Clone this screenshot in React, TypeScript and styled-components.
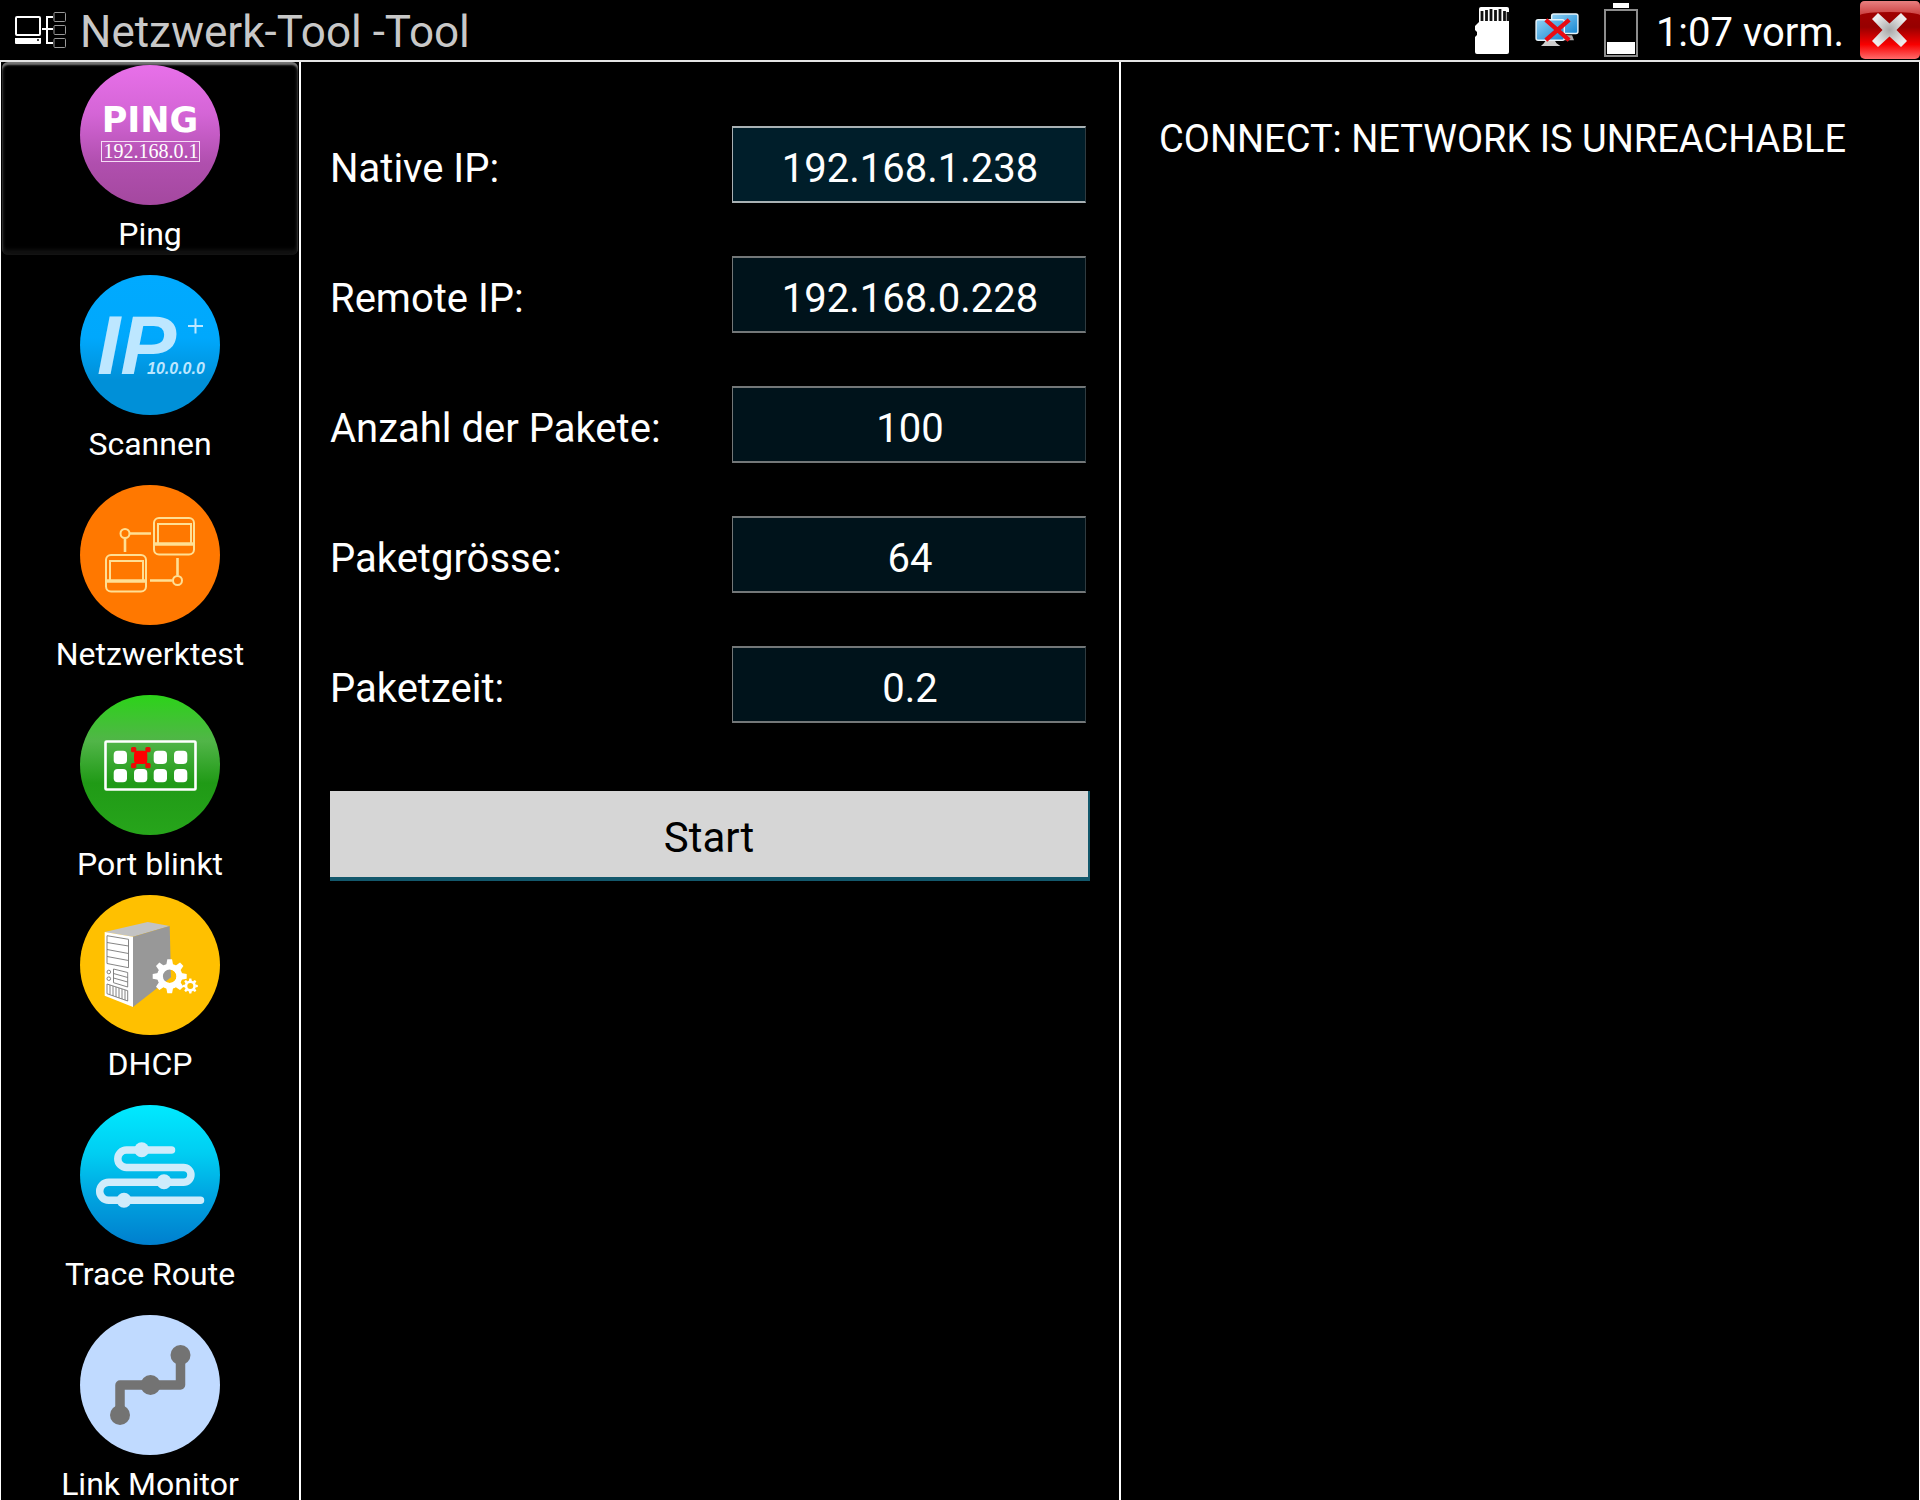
import React, { useState } from "react";
import styled, { createGlobalStyle } from "styled-components";

const GlobalStyle = createGlobalStyle`
  *, *::before, *::after { box-sizing: border-box; }
  body {
    margin: 0;
    background: #000;
    color: #fff;
    font-family: Roboto, "Liberation Sans", sans-serif;
  }
  button, input { font: inherit; color: inherit; }
`;

const Screen = styled.div`
  display: flex;
  flex-direction: column;
  height: 100vh;
  overflow: hidden;
`;

const TopBar = styled.header`
  flex: none;
  display: flex;
  align-items: center;
  height: 62px;
  padding-left: 14px;
  border-bottom: 2px solid #e4e4e4;
`;

const Title = styled.h1`
  flex: 1;
  margin: 0;
  padding: 4px 0 0 13px;
  font-size: 44px;
  font-weight: 400;
  line-height: 52px;
  color: #c8c8c8;
`;

const StatusArea = styled.div`
  display: flex;
  align-items: center;
  height: 60px;
`;

const StatusIcons = styled.div`
  display: flex;
  align-items: center;
  gap: 25px;
`;

const Clock = styled.time`
  padding: 6px 16px 0 18px;
  font-size: 40px;
  line-height: 48px;
`;

const CloseButton = styled.button`
  display: block;
  width: 60px;
  height: 60px;
  padding: 0;
  border: 0;
  background: none;
  cursor: pointer;
`;

const Columns = styled.div`
  flex: 1;
  min-height: 0;
  display: grid;
  grid-template-columns: 301px 820fr 799fr;
`;

const Sidebar = styled.nav`
  display: flex;
  flex-direction: column;
  gap: 7px;
  min-height: 0;
  overflow-y: auto;
  scrollbar-width: none;
  border-left: 1px solid #fff;
  border-right: 2px solid #fff;
`;

const ToolGroup = styled.div`
  flex: none;
  display: flex;
  flex-direction: column;
  gap: 17px;
`;

const ToolButton = styled.button<{ $active: boolean }>`
  display: flex;
  flex-direction: column;
  align-items: center;
  gap: 13px;
  margin: 0 1px;
  padding: 3px 0 5px;
  border: 0;
  border-radius: 6px;
  background: none;
  box-shadow: ${(p) =>
    p.$active
      ? "inset 0 3px 2px #777, inset 2px 0 3px #141414, inset -2px 0 3px #141414, inset 0 -5px 4px #141414"
      : "none"};
  cursor: pointer;

  svg { display: block; }
`;

const ToolLabel = styled.span`
  font-size: 32px;
  line-height: 32px;
`;

const SettingsPanel = styled.form`
  padding: 64px 29px;
  border-right: 2px solid #fff;
`;

const Fields = styled.div`
  display: grid;
  gap: 53px;
  padding-right: 4px;
`;

const Field = styled.div`
  display: grid;
  grid-template-columns: 402fr 354fr;
  align-items: center;
`;

const FieldLabel = styled.label`
  padding-top: 9px;
  font-size: 40px;
  line-height: 48px;
`;

const FieldInput = styled.input<{ $bright: boolean }>`
  width: 100%;
  height: 77px;
  padding: 7px 8px 0 10px;
  border: solid ${(p) => (p.$bright ? "#a9b1b4" : "#737778")};
  border-width: 2px 1px;
  border-right-color: #2f3b40;
  border-radius: 0;
  outline: 0;
  background: ${(p) => (p.$bright ? "#001e2a" : "#00131b")};
  font-size: 40px;
  text-align: center;
`;

const StartButton = styled.button`
  display: block;
  width: 100%;
  height: 90px;
  margin-top: 68px;
  padding: 7px 0 0;
  border: solid #13586c;
  border-width: 0 2px 4px 0;
  background: #d6d6d6;
  color: #000;
  font-size: 42px;
  cursor: pointer;
`;

const OutputPanel = styled.section`
  padding: 54px 38px;
  border-right: 1px solid #fff;
`;

const OutputText = styled.output`
  display: block;
  font-size: 38px;
  line-height: 46px;
`;

function AppIcon() {
  return (
    <svg width="53" height="37" viewBox="14 12 53 37" fill="none" aria-hidden="true">
      <rect x="16" y="17" width="24" height="18" rx="1" stroke="#fff" strokeWidth="2" />
      <path d="M15 38h26v5q0 1-1 1H16q-1 0-1-1z" fill="#fff" />
      <path d="M37 40h2" stroke="#000" strokeWidth="1.5" />
      <path d="M53 17H47V43H53M42 29H53" stroke="#fff" strokeWidth="2" />
      <g stroke="#999">
        <rect x="54" y="12.5" width="11.5" height="9" rx="1" />
        <rect x="54" y="25.5" width="11.5" height="9" rx="1" />
        <rect x="54" y="38.5" width="11.5" height="9" rx="1" />
      </g>
    </svg>
  );
}

function SdCardIcon() {
  return (
    <svg width="36" height="47" viewBox="0 0 36 47" role="img" aria-label="SD-Karte">
      <path d="M7 0H33q2 0 2 2V45q0 2-2 2H3q-2 0-2-2V30l2-2V25L1 23V19L5 15V2q0-2 2-2z" fill="#fff" />
      <path d="M8 4v10M12.5 3v11M17 2v12M21.500 3v11M26 2v12M30.500 4v10M34 5v9" stroke="#111" strokeWidth="2.800" />
    </svg>
  );
}

function NetworkOffIcon() {
  return (
    <svg width="44" height="35" viewBox="0 0 45 36" role="img" aria-label="Netzwerk getrennt">
      <defs>
        <linearGradient id="monitor" x1="0" y1="0" x2="1" y2="1">
          <stop offset="0" stopColor="#8fd0f4" />
          <stop offset="1" stopColor="#1687d2" />
        </linearGradient>
      </defs>
      <path d="M26 28l4-5h8l2 5z" fill="#aaa" />
      <rect x="17" y="1" width="27" height="20" rx="2" fill="url(#monitor)" stroke="#e6f3fa" strokeWidth="1.5" />
      <path d="M6 34l3-3 2-3h9l2 3 4 3z" fill="#ccc" />
      <rect x="1" y="7" width="29" height="21" rx="2" fill="url(#monitor)" stroke="#e6f3fa" strokeWidth="1.5" />
      <path d="M11 7L35 28M35 7L11 28" stroke="#e80c14" strokeWidth="4.500" />
    </svg>
  );
}

function BatteryIcon() {
  return (
    <svg width="34" height="54" viewBox="0 0 34 54" role="img" aria-label="Akku schwach">
      <rect x="9" y="0" width="16" height="5" fill="#fff" />
      <rect x="1" y="7" width="32" height="46" fill="none" stroke="#8d8d8d" strokeWidth="2" />
      <rect x="3" y="39" width="28" height="12" fill="#fff" />
    </svg>
  );
}

function CloseIcon() {
  return (
    <svg width="60" height="60" viewBox="0 0 60 60" aria-hidden="true">
      <defs>
        <linearGradient id="closeBody" x1="0" y1="0" x2="0" y2="1">
          <stop offset="0.200" stopColor="#a00000" />
          <stop offset="0.450" stopColor="#970000" />
          <stop offset="0.750" stopColor="#f80000" />
          <stop offset="1" stopColor="#ff6a6a" />
        </linearGradient>
        <linearGradient id="closeGloss" x1="0" y1="0" x2="0" y2="1">
          <stop offset="0" stopColor="#e98080" />
          <stop offset="1" stopColor="#cb3f3f" />
        </linearGradient>
        <radialGradient id="closeCross">
          <stop offset="0" stopColor="#a8a8a8" />
          <stop offset="1" stopColor="#ececec" />
        </radialGradient>
      </defs>
      <rect x="0" y="1" width="60" height="58" rx="5" fill="url(#closeBody)" />
      <path d="M0 15V6q0-5 5-5H55q5 0 5 5V15Q55 12 30 12T0 15z" fill="url(#closeGloss)" />
      <path
        d="M18 13L29.500 23.500 41 13 47 19 36.500 30 47 41 41 47 29.500 36.500 18 47 12 41 22.500 30 12 19z"
        fill="url(#closeCross)"
      />
    </svg>
  );
}

const Disc = ({ id, stops, children }: { id: string; stops: [number, string][]; children: React.ReactNode }) => (
  <svg width="140" height="140" viewBox="0 0 140 140" aria-hidden="true">
    <defs>
      <linearGradient id={id} x1="0" y1="0" x2="0" y2="1">
        {stops.map(([offset, color]) => (
          <stop key={offset} offset={offset} stopColor={color} />
        ))}
      </linearGradient>
    </defs>
    <circle cx="70" cy="70" r="70" fill={`url(#${id})`} />
    {children}
  </svg>
);

const PingIcon = () => (
  <Disc id="ping" stops={[[0, "#e870e9"], [0.35, "#d465d6"], [0.7, "#b04fae"], [1, "#a4489f"]]}>
    <text x="70" y="67" textAnchor="middle" fill="#fff" fontFamily="DejaVu Sans, sans-serif" fontWeight="700" fontSize="35">PING</text>
    <rect x="21.500" y="76.500" width="98" height="20" fill="none" stroke="#f6dcf6" />
    <text x="71" y="93" textAnchor="middle" fill="#fff" fontFamily="Liberation Serif, serif" fontSize="20">192.168.0.1</text>
  </Disc>
);

const ScanIcon = () => (
  <Disc id="scan" stops={[[0, "#00aaff"], [0.45, "#00a8fc"], [0.75, "#0090d8"], [1, "#0090d8"]]}>
    <g fill="#bde7ff" fontFamily="Liberation Sans, sans-serif" fontWeight="700" fontStyle="italic">
      <text x="17" y="99" fontSize="84">IP</text>
      <text x="67" y="99" fontSize="16" fontFamily="Liberation Sans Narrow, Liberation Sans, sans-serif">10.0.0.0</text>
    </g>
    <path d="M108 51h15M115.500 43.500v15" stroke="#bde7ff" strokeWidth="2" />
  </Disc>
);

const Computer = ({ x, y }: { x: number; y: number }) => (
  <g transform={`translate(${x} ${y})`}>
    <rect x="1" y="1" width="40" height="36.500" rx="5" strokeWidth="2" />
    <path d="M5 27V7H38V27" strokeWidth="2" />
    <path d="M2 27H40" strokeWidth="3.500" />
  </g>
);

const NetTestIcon = () => (
  <Disc id="nettest" stops={[[0, "#ff7800"], [1, "#ff7800"]]}>
    <g fill="none" stroke="#ffdf94">
      <Computer x={73} y={32} />
      <Computer x={25} y={69} />
      <g strokeWidth="2.600">
        <path d="M50 48.500H71M45 53.500V67M97.500 73V90.500M92.500 95.500H70" />
        <circle cx="45" cy="48.500" r="4.500" strokeWidth="2" />
        <circle cx="97.500" cy="95.500" r="4.500" strokeWidth="2" />
      </g>
    </g>
  </Disc>
);

const PortIcon = () => (
  <Disc id="port" stops={[[0, "#2cd319"], [0.33, "#51b548"], [0.63, "#209a16"], [1, "#27a51b"]]}>
    <rect x="25.500" y="46.500" width="90" height="48" rx="1" fill="none" stroke="#fff" strokeWidth="2.600" />
    {[55.700, 74].map((y) =>
      [33.700, 54, 73.700, 94].map((x) => (
        <rect key={`${x}-${y}`} x={x} y={y} width="13.300" height="13.300" rx="4" fill={x === 54 && y < 60 ? "#f00" : "#fff"} />
      ))
    )}
    {[51, 65.300].map((x) =>
      [52, 68].map((y) => <rect key={`${x}-${y}`} x={x} y={y} width="5.300" height="5.300" rx="1.500" fill="#e80f08" />)
    )}
    <path d="M54 55l3 3M68 55l-3 3M54 70l3-3M68 70l-3-3" stroke="#f00" strokeWidth="2" />
  </Disc>
);

const Gear = ({ cx, cy, r }: { cx: number; cy: number; r: number }) => (
  <g transform={`translate(${cx} ${cy})`}>
    <circle r={r * 0.57} fill="none" stroke="#fff" strokeWidth={r * 0.34} />
    {[0, 45, 90, 135, 180, 225, 270, 315].map((a) => (
      <path
        key={a}
        transform={`rotate(${a})`}
        d={`M${-r * 0.2} ${-r * 0.68}L${-r * 0.14} ${-r}H${r * 0.14}L${r * 0.2} ${-r * 0.68}z`}
        fill="#fff"
      />
    ))}
  </g>
);

const DhcpIcon = () => (
  <Disc id="dhcp" stops={[[0, "#ffc000"], [1, "#ffc000"]]}>
    <path d="M24.700 37L67.700 27 89.700 31 53 41.700z" fill="#c3c3c3" />
    <path d="M53 41.700L89.700 31 91 82.300 53 112z" fill="#989898" />
    <path d="M24.700 37L53 41.700V112L24.700 100.700z" fill="#fff" />
    <g fill="none" stroke="#777" strokeWidth="0.900">
      <path d="M27 40.700L48.500 44.300V72.700L27 68.500zM27 47.500L48.500 51M27 54.500L48.500 58.500M27 61.500L48.500 65.500" />
      <circle cx="28.800" cy="77" r="1.800" />
      <circle cx="28.800" cy="83.700" r="1.800" />
      <path d="M33.500 74L47.700 77.500V92L33.500 87.700zM33.500 78.500L47.700 82.500M33.500 83L47.700 87" />
      <path d="M27 89L47.700 95.700V106L27 98.700zM30 90v9.500M33 91v10M36 92v10M39 93v10M42 94v10M45 95v10" />
    </g>
    <circle cx="89.700" cy="81.300" r="12" fill="#fff" />
    <circle cx="89.700" cy="81.300" r="6.800" fill="#ffc000" />
    <path d="M90.700 74.500A6.800 6.800 0 1 0 85.700 86.500L91 82.300z" fill="#989898" />
    <Gear cx={89.700} cy={81.300} r={17} />
    <Gear cx={110.300} cy={91} r={7.500} />
  </Disc>
);

const TraceIcon = () => (
  <Disc id="trace" stops={[[0, "#00eaff"], [0.35, "#00cdf2"], [0.65, "#00a4e0"], [1, "#007fce"]]}>
    <path
      d="M91.500 45H46.500A8.700 8.700 0 0 0 46.500 62.400H103.500A7.400 7.400 0 0 1 103.500 77.300H28.700A9 9 0 0 0 28.700 95.300H120.500"
      fill="none"
      stroke="#cfecfb"
      strokeWidth="7.500"
      strokeLinecap="round"
    />
    <g fill="#cfecfb">
      <circle cx="61.700" cy="44.700" r="7.500" />
      <circle cx="84" cy="76.700" r="7.500" />
      <circle cx="44" cy="95.300" r="7.500" />
    </g>
  </Disc>
);

const LinkIcon = () => (
  <Disc id="link" stops={[[0, "#c0daff"], [1, "#c0daff"]]}>
    <path d="M40 100V70H100.500V40" fill="none" stroke="#737373" strokeWidth="9.500" strokeLinejoin="round" />
    <g fill="#737373">
      <circle cx="40" cy="100" r="10" />
      <circle cx="70.500" cy="70" r="10" />
      <circle cx="100.500" cy="40" r="10" />
    </g>
  </Disc>
);

const toolGroups = [
  [
    { name: "Ping", Icon: PingIcon },
    { name: "Scannen", Icon: ScanIcon },
    { name: "Netzwerktest", Icon: NetTestIcon },
    { name: "Port blinkt", Icon: PortIcon },
  ],
  [
    { name: "DHCP", Icon: DhcpIcon },
    { name: "Trace Route", Icon: TraceIcon },
    { name: "Link Monitor", Icon: LinkIcon },
  ],
];

const fields = [
  { id: "native-ip", label: "Native IP:", value: "192.168.1.238" },
  { id: "remote-ip", label: "Remote IP:", value: "192.168.0.228" },
  { id: "count", label: "Anzahl der Pakete:", value: "100" },
  { id: "size", label: "Paketgrösse:", value: "64" },
  { id: "interval", label: "Paketzeit:", value: "0.2" },
];

export default function App() {
  const [active, setActive] = useState("Ping");

  return (
    <Screen>
      <GlobalStyle />
      <TopBar>
        <AppIcon />
        <Title>Netzwerk-Tool -Tool</Title>
        <StatusArea>
          <StatusIcons>
            <SdCardIcon />
            <NetworkOffIcon />
            <BatteryIcon />
          </StatusIcons>
          <Clock dateTime="01:07">1:07 vorm.</Clock>
          <CloseButton type="button" aria-label="Schließen">
            <CloseIcon />
          </CloseButton>
        </StatusArea>
      </TopBar>
      <Columns>
        <Sidebar>
          {toolGroups.map((group, i) => (
            <ToolGroup key={i}>
              {group.map(({ name, Icon }) => (
                <ToolButton key={name} type="button" $active={name === active} onClick={() => setActive(name)}>
                  <Icon />
                  <ToolLabel>{name}</ToolLabel>
                </ToolButton>
              ))}
            </ToolGroup>
          ))}
        </Sidebar>
        <SettingsPanel onSubmit={(e) => e.preventDefault()}>
          <Fields>
            {fields.map((f, i) => (
              <Field key={f.id}>
                <FieldLabel htmlFor={f.id}>{f.label}</FieldLabel>
                <FieldInput id={f.id} defaultValue={f.value} $bright={i === 0} />
              </Field>
            ))}
          </Fields>
          <StartButton type="submit">Start</StartButton>
        </SettingsPanel>
        <OutputPanel>
          <OutputText>CONNECT: NETWORK IS UNREACHABLE</OutputText>
        </OutputPanel>
      </Columns>
    </Screen>
  );
}
